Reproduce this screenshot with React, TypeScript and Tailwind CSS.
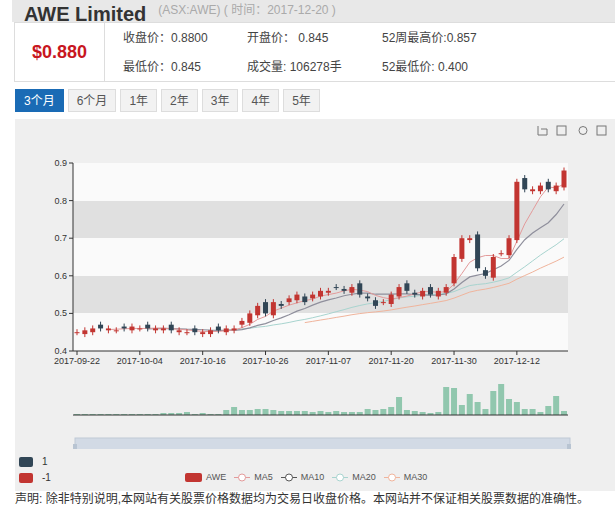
const closes = [
  0.45, 0.455, 0.46, 0.46, 0.46, 0.455, 0.46, 0.465, 0.46, 0.46,
  0.46, 0.46, 0.455, 0.455, 0.45, 0.45, 0.45, 0.455, 0.455, 0.46,
  0.46, 0.48, 0.5, 0.52, 0.5, 0.53, 0.52, 0.54, 0.55, 0.53,
  0.55, 0.56, 0.56, 0.57, 0.56, 0.57, 0.55, 0.54, 0.52, 0.53,
  0.55, 0.57, 0.56, 0.55, 0.56, 0.55, 0.56, 0.57, 0.65, 0.7,
  0.7, 0.62, 0.6, 0.65, 0.66, 0.7, 0.85, 0.83, 0.83, 0.84,
  0.83, 0.84, 0.88,
];
const vols = [
  1, 1, 1, 1, 1, 1, 1, 1, 1, 1, 1, 2, 2, 2, 3, 1, 2, 1, 1, 5,
  8, 5, 5, 6, 6, 5, 4, 4, 4, 4, 3, 4, 3, 4, 3, 3, 3, 6, 5, 6,
  8, 18, 5, 4, 3, 2, 3, 28, 27, 10, 21, 13, 6, 24, 31, 16, 13, 6, 6, 3,
  9, 19, 4,
];
const X0 = 73, X1 = 568, N = closes.length;
const px = (i: number) => X0 + 4 + i * ((X1 - X0 - 8) / (N - 1));
const py = (v: number) => 352 - ((v - 0.4) / 0.5) * 188;
const ma = (n: number) =>
  closes.map((_, i) => {
    if (i < n - 1) return null;
    const s = closes.slice(i - n + 1, i + 1);
    return s.reduce((a, b) => a + b, 0) / n;
  });
const line = (arr: (number | null)[]) =>
  arr.map((v, i) => (v == null ? '' : `${px(i)},${py(v)}`)).filter(Boolean).join(' ');

const labels = ['2017-09-22', '2017-10-04', '2017-10-16', '2017-10-26', '2017-11-07', '2017-11-20', '2017-11-30', '2017-12-12'];

function Chart() {
  return (
    <svg width="600" height="330" viewBox="15 120 600 330" className="block" style={{ fontFamily: 'Liberation Sans, sans-serif' }}>
      <rect x={X0} y={164} width={X1 - X0} height={38} fill="#fafafa" />
      <rect x={X0} y={202} width={X1 - X0} height={37} fill="#e0e0e0" />
      <rect x={X0} y={239} width={X1 - X0} height={38} fill="#fafafa" />
      <rect x={X0} y={277} width={X1 - X0} height={37} fill="#e0e0e0" />
      <rect x={X0} y={314} width={X1 - X0} height={38} fill="#fafafa" />
      {[0.9, 0.8, 0.7, 0.6, 0.5, 0.4].map((v) => (
        <g key={v}>
          <line x1={X0 - 4} x2={X0} y1={py(v)} y2={py(v)} stroke="#333" />
          <text x={X0 - 6} y={py(v) + 3} fontSize="9" textAnchor="end" fill="#333">{v.toFixed(1)}</text>
        </g>
      ))}
      <line x1={X0} x2={X0} y1={164} y2={352} stroke="#333" />
      <line x1={X0} x2={X1} y1={352} y2={352} stroke="#333" />
      {labels.map((l, k) => (
        <g key={l}>
          <line x1={px(k * 8)} x2={px(k * 8)} y1={352} y2={356} stroke="#333" />
          <text x={px(k * 8)} y={365} fontSize="9" textAnchor="middle" fill="#333">{l}</text>
        </g>
      ))}
      <polyline points={line(ma(30))} fill="none" stroke="#f0b49c" strokeWidth="1" />
      <polyline points={line(ma(20))} fill="none" stroke="#a8d4cf" strokeWidth="1" />
      <polyline points={line(ma(10))} fill="none" stroke="#8f8f9c" strokeWidth="1.2" />
      <polyline points={line(ma(5))} fill="none" stroke="#e39a9a" strokeWidth="1" />
      {closes.map((c, i) => {
        const o = i === 0 ? 0.45 : closes[i - 1] + (i % 3 === 0 ? 0.01 : -0.005);
        const up = c >= o;
        const hi = Math.max(o, c) + 0.008, lo = Math.min(o, c) - 0.008;
        const col = up ? '#c23531' : '#314656';
        const top = py(Math.max(o, c));
        const h = Math.max(1, py(Math.min(o, c)) - top);
        return (
          <g key={i}>
            <line x1={px(i)} x2={px(i)} y1={py(hi)} y2={py(lo)} stroke={col} />
            <rect x={px(i) - 2.5} y={top} width={5} height={h} fill={col} />
          </g>
        );
      })}
      {vols.map((v, i) => (
        <rect key={i} x={px(i) - 3} y={416 - v} width={6} height={v} fill="#91c7ae" />
      ))}
      <line x1={X0} x2={X1} y1={416} y2={416} stroke="#333" />
      <rect x={75} y={439} width={495} height={22} fill="#d2dae5" stroke="#bfc9d6" />
      <rect x={73} y={445} width={4} height={8} fill="#b8c4d2" />
      <rect x={567} y={445} width={4} height={8} fill="#b8c4d2" />
      <g stroke="#777" fill="none" strokeWidth="1">
        <path d="M538 127v9h9M541 130h6v6" />
        <rect x={557} y={127} width={9} height={9} />
        <circle cx={583} cy={131.5} r={4} />
        <rect x={597} y={127} width={9} height={9} />
      </g>
    </svg>
  );
}

export default function App() {
  return (
    <div className="w-[615px] h-[519px] overflow-hidden bg-white text-[#333]" style={{ fontFamily: '"Liberation Sans", "Noto Sans CJK SC", sans-serif' }}>
      <div className="h-[22px] bg-[#e8e8e8] pl-[12px] flex items-end gap-3 ml-[12px]">
        <span className="text-[20px] font-bold text-[#333] leading-none -mb-[2px]">AWE Limited</span>
        <span className="text-[12px] text-[#aaa] leading-none mb-[6px]">(ASX:AWE) ( 时间：2017-12-20 )</span>
      </div>
      <div className="ml-[14px] h-[60px] border border-[#ddd] border-r-0 flex">
        <div className="w-[90px] border-r border-[#ddd] flex items-center justify-center text-[18px] font-bold text-[#c8161e]">$0.880</div>
        <div className="grid grid-cols-[124px_135px_150px] grid-rows-2 pl-[18px] text-[12px] text-[#444] items-center">
          <span>收盘价：0.8800</span><span>开盘价： 0.845</span><span>52周最高价:0.857</span>
          <span>最低价：0.845</span><span>成交量: 106278手</span><span>52最低价: 0.400</span>
        </div>
      </div>
      <div className="ml-[15px] mt-[7px] flex gap-[4px] text-[12px]">
        {['3个月', '6个月', '1年', '2年', '3年', '4年', '5年'].map((t, i) => (
          <div key={t} className={`h-[23px] px-[8px] flex items-center border ${i === 0 ? 'bg-[#1a6bb5] border-[#1a6bb5] text-white' : 'bg-[#f2f2f2] border-[#ddd] text-[#555]'}`}>{t}</div>
        ))}
      </div>
      <div className="ml-[15px] mt-[7px] h-[372px] bg-[#efefef] relative">
        <Chart />
        <div className="absolute left-[4px] top-[338px] flex flex-col gap-[6px] text-[10px] leading-none">
          <div className="flex items-center gap-[9px]"><span className="w-[14px] h-[10px] rounded-[2px] bg-[#314656]" />1</div>
          <div className="flex items-center gap-[9px]"><span className="w-[14px] h-[10px] rounded-[2px] bg-[#c23531]" />-1</div>
        </div>
        <div className="absolute left-[170px] top-[352px] flex items-center gap-[8px] text-[9px] text-[#555]">
          <span className="flex items-center gap-[4px]"><span className="w-[17px] h-[9px] rounded-[2px] bg-[#c23531]" />AWE</span>
          {[['MA5', '#e39a9a'], ['MA10', '#555'], ['MA20', '#a8d4cf'], ['MA30', '#f0b49c']].map(([n, c]) => (
            <span key={n} className="flex items-center gap-[4px]">
              <svg width="16" height="9"><line x1="0" x2="16" y1="4.5" y2="4.5" stroke={c} /><circle cx="8" cy="4.5" r="3.5" fill="#fff" stroke={c} /></svg>
              {n}
            </span>
          ))}
        </div>
      </div>
      <div className="ml-[15px] mt-[2px] text-[12px] text-[#333] leading-none">声明: 除非特别说明,本网站有关股票价格数据均为交易日收盘价格。本网站并不保证相关股票数据的准确性。</div>
    </div>
  );
}
